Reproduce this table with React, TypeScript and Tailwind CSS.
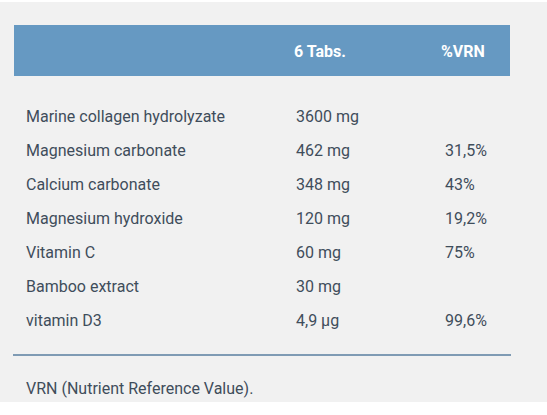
const rows = [
  { name: "Marine collagen hydrolyzate", amount: "3600 mg", vrn: "" },
  { name: "Magnesium carbonate", amount: "462 mg", vrn: "31,5%" },
  { name: "Calcium carbonate", amount: "348 mg", vrn: "43%" },
  { name: "Magnesium hydroxide", amount: "120 mg", vrn: "19,2%" },
  { name: "Vitamin C", amount: "60 mg", vrn: "75%" },
  { name: "Bamboo extract", amount: "30 mg", vrn: "" },
  { name: "vitamin D3", amount: "4,9 µg", vrn: "99,6%" },
];

export default function App() {
  return (
    <div className="w-[547px] h-[415px] bg-white pt-[2px] font-['Roboto',sans-serif]">
      <div className="bg-[#f1f1f1] h-[400px] pt-[23px]">
        {/* Header */}
        <div className="ml-[14px] w-[496px] h-[51px] bg-[#6699c2] flex items-center pt-[2px] text-white font-bold text-[16px]">
          <span className="ml-[280px] w-[147px]">6 Tabs.</span>
          <span>%VRN</span>
        </div>

        {/* Rows */}
        <div className="mt-[24px] text-[#3f4d5b] text-[16px]">
          {rows.map((r) => (
            <div key={r.name} className="h-[34px] flex items-center pl-[26px]">
              <span className="w-[270px]">{r.name}</span>
              <span className="w-[149px]">{r.amount}</span>
              <span>{r.vrn}</span>
            </div>
          ))}
        </div>

        <div className="ml-[13px] w-[498px] h-[2px] bg-[#7f9bb4] mt-[16px]" />

        <p className="mt-[23px] pl-[26px] text-[16px] text-[#3f4d5b] leading-[20px]">
          VRN (Nutrient Reference Value).
        </p>
      </div>
    </div>
  );
}
